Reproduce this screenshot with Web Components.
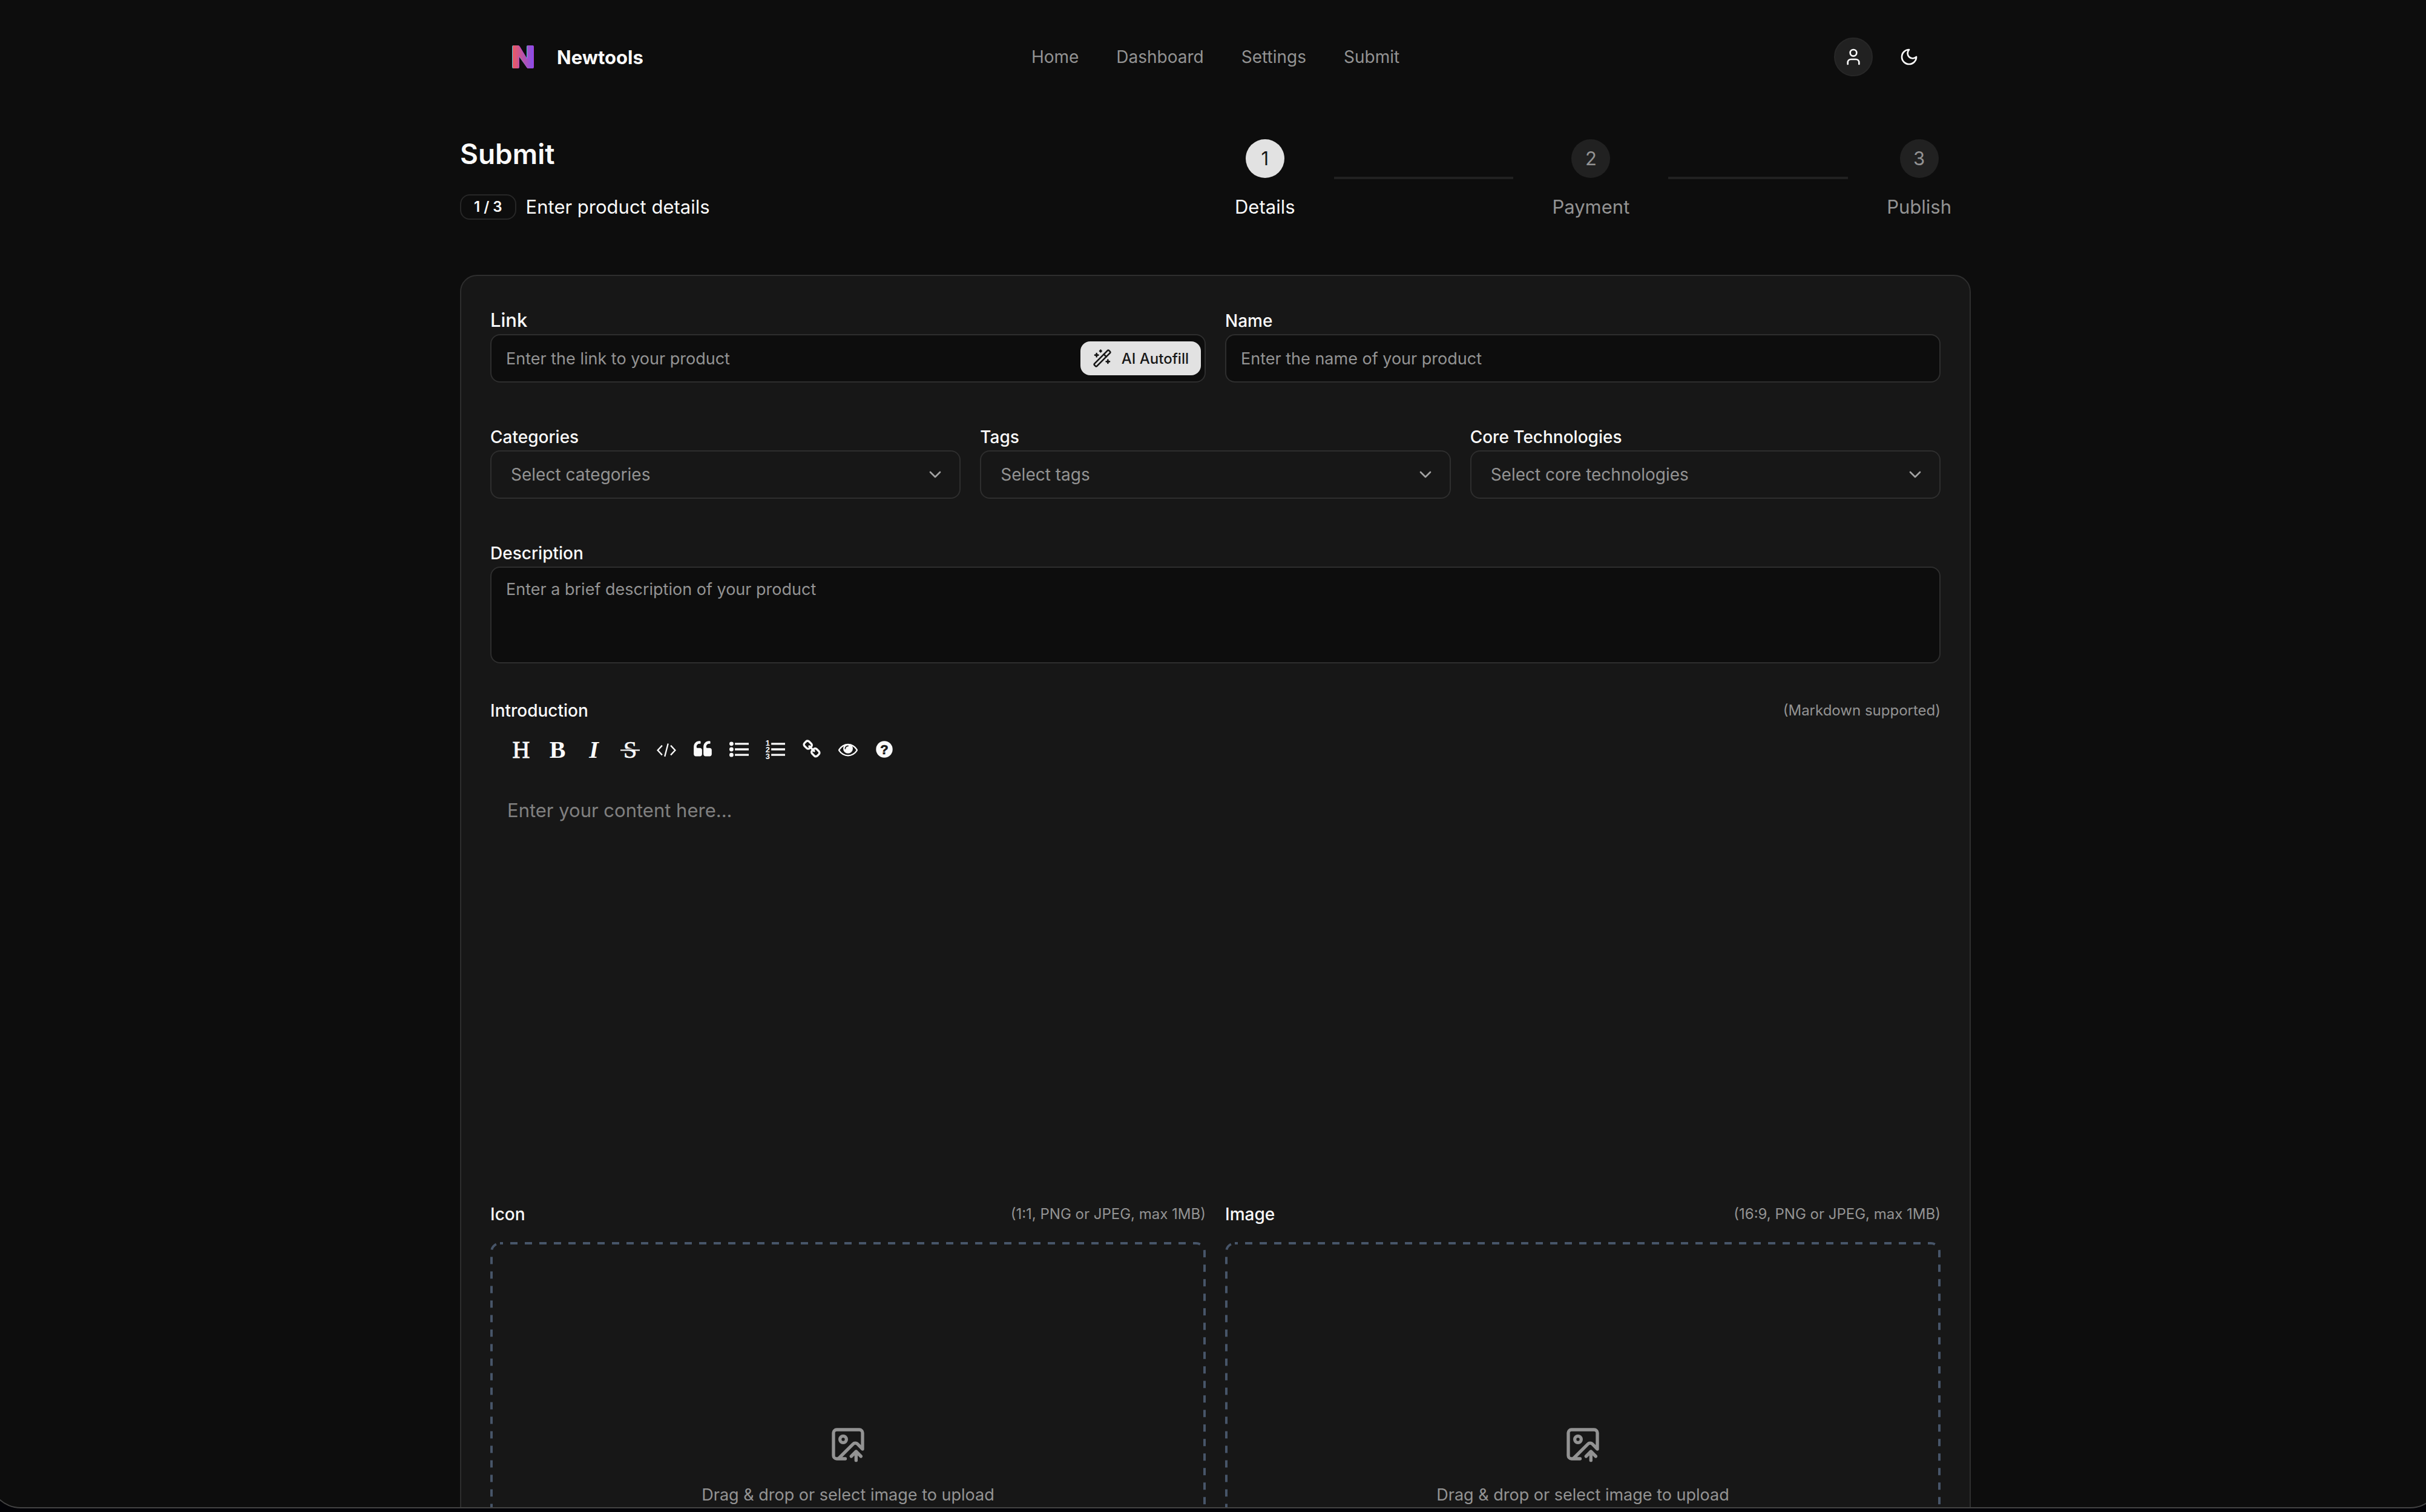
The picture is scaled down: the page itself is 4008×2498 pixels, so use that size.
<!DOCTYPE html>
<html lang="en">
<head>
<meta charset="UTF-8">
<title>Submit - Newtools</title>
<style>
    html {
        background: #030307;
    }

    body {
        margin: 0;
        overflow: hidden;
        font-family: Inter, "Liberation Sans", sans-serif;
        color: #fafafa;

        --bg: #0d0d0d;
        --card: #171717;
        --border: #2e2e2e;
        --muted: #939393;
        --secondary: #212121;
        --primary: #e2e2e2;
    }
</style>
</head>
<body>
<app-window>
    <site-header></site-header>
    <page-intro heading="Submit" step="1 / 3" text="Enter product details">
        <step-list></step-list>
    </page-intro>
    <form-card>
        <form-row columns="2">
            <text-field label="Link" placeholder="Enter the link to your product" large autofill></text-field>
            <text-field label="Name" placeholder="Enter the name of your product"></text-field>
        </form-row>
        <form-row columns="3">
            <select-field label="Categories" placeholder="Select categories"></select-field>
            <select-field label="Tags" placeholder="Select tags"></select-field>
            <select-field label="Core Technologies" placeholder="Select core technologies"></select-field>
        </form-row>
        <area-field label="Description" placeholder="Enter a brief description of your product"></area-field>
        <markdown-editor></markdown-editor>
        <form-row columns="2">
            <upload-field label="Icon" hint="(1:1, PNG or JPEG, max 1MB)"></upload-field>
            <upload-field label="Image" hint="(16:9, PNG or JPEG, max 1MB)"></upload-field>
        </form-row>
    </form-card>
</app-window>

<script>
class BaseElement extends HTMLElement {
    constructor() {
        super();
        this.attachShadow({ mode: 'open' });
        this.render();
    }

    attr(name) {
        return this.getAttribute(name) || '';
    }
}

// Rules shared by all the form controls
const controlStyles = `
    * { box-sizing: border-box; }

    label {
        display: block;
        font-size: 28px;
        font-weight: 500;
        line-height: 44px;
    }

    input, textarea, select {
        display: block;
        width: 100%;
        margin: 0;
        border: 2px solid var(--border);
        border-radius: 16px;
        background: var(--bg);
        color: var(--muted);
        font-family: inherit;
        font-size: 27px;
        line-height: 40px;
        outline: none;
    }

    ::placeholder {
        color: var(--muted);
        opacity: 1;
    }
`;

// Label on the left, small note on the right
const headStyles = `
    .head {
        display: flex;
        justify-content: space-between;
        align-items: center;
        line-height: 20px;
    }

    .head label { line-height: 20px; }

    .hint {
        font-size: 24px;
        color: var(--muted);
    }
`;

class AppWindow extends BaseElement {
    render() {
        this.shadowRoot.innerHTML = `
            <style>
                :host {
                    display: block;
                    box-sizing: border-box;
                    height: calc(100vh - 6px);
                    margin: 0 -26px 0 -18px;
                    overflow: hidden;
                    background: var(--bg);
                    border: 2px solid #434343;
                    border-top: 0;
                    border-radius: 0 0 52px 52px;
                }

                main {
                    max-width: 2496px;
                    margin: 0 auto;
                }
            </style>
            <main><slot></slot></main>
        `;
    }
}

class SiteHeader extends BaseElement {
    render() {
        this.shadowRoot.innerHTML = `
            <style>
                :host { display: block; }

                header {
                    display: grid;
                    grid-template-columns: 1fr auto 1fr;
                    align-items: center;
                    height: 188px;
                    padding: 0 66px;
                }

                a {
                    color: inherit;
                    text-decoration: none;
                }

                .brand {
                    display: flex;
                    align-items: center;
                    gap: 24px;
                    font-size: 31px;
                    font-weight: 700;
                }

                nav {
                    display: flex;
                    gap: 62px;
                    font-size: 28px;
                    color: var(--muted);
                }

                .actions {
                    display: flex;
                    align-items: center;
                    justify-content: flex-end;
                    gap: 24px;
                }

                button {
                    display: flex;
                    align-items: center;
                    justify-content: center;
                    box-sizing: border-box;
                    width: 72px;
                    height: 72px;
                    padding: 0;
                    border: 0;
                    background: none;
                    color: inherit;
                }

                .user {
                    width: 64px;
                    height: 64px;
                    border: 2px solid #272727;
                    border-radius: 50%;
                    background: var(--secondary);
                }

                .actions svg {
                    width: 32px;
                    height: 32px;
                    fill: none;
                    stroke: currentColor;
                    stroke-width: 2;
                    stroke-linecap: round;
                    stroke-linejoin: round;
                }
            </style>
            <header>
                <a class="brand" href="#">
                    <svg width="70" height="64" viewBox="0 0 70 64" aria-hidden="true">
                        <defs>
                            <linearGradient id="fill" x1="20" y1="0" x2="56" y2="0" gradientUnits="userSpaceOnUse">
                                <stop offset="0" stop-color="#ee5a5e"/>
                                <stop offset="1" stop-color="#844df0"/>
                            </linearGradient>
                        </defs>
                        <path fill="#45c8dc" d="M22 13h7q2 0 3 2l12 19V15q0-2 2-2h7q2 0 2 2v34q0 2-2 2h-6q-2 0-3-2L31 31v18q0 2-2 2h-7q-2 0-2-2V15q0-2 2-2z"/>
                        <path fill="#b93fd0" d="M24 13h6q2 0 3 2l12 20V15q0-2 2-2h7q2 0 2 2v34q0 2-2 2h-7q-2 0-3-2L32 29v20q0 2-2 2h-6q-2 0-2-2V15q0-2 2-2z"/>
                        <path fill="url(#fill)" d="M23 13h6q2 0 3 2l13 21V15q0-2 2-2h6q2 0 2 2v34q0 2-2 2h-6q-2 0-3-2L31 30v19q0 2-2 2h-6q-2 0-2-2V15q0-2 2-2z"/>
                    </svg>
                    <span>Newtools</span>
                </a>
                <nav>
                    <a href="#">Home</a>
                    <a href="#">Dashboard</a>
                    <a href="#">Settings</a>
                    <a href="#">Submit</a>
                </nav>
                <div class="actions">
                    <button class="user" type="button" aria-label="Account">
                        <svg viewBox="0 0 24 24"><path d="M19 21v-2a4 4 0 0 0-4-4H9a4 4 0 0 0-4 4v2"/><circle cx="12" cy="7" r="4"/></svg>
                    </button>
                    <button type="button" aria-label="Toggle theme">
                        <svg viewBox="0 0 24 24"><path d="M12 3a6 6 0 0 0 9 9 9 9 0 1 1-9-9Z"/></svg>
                    </button>
                </div>
            </header>
        `;
    }
}

class PageIntro extends BaseElement {
    render() {
        this.shadowRoot.innerHTML = `
            <style>
                :host {
                    display: grid;
                    grid-template-columns: 1fr 1fr;
                    padding: 34px 0 88px;
                }

                h1 {
                    margin: 0 0 32px;
                    font-size: 46px;
                    font-weight: 600;
                    line-height: 64px;
                }

                .row {
                    display: flex;
                    align-items: center;
                    gap: 16px;
                    font-size: 31px;
                    line-height: 48px;
                }

                .badge {
                    padding: 0 21px;
                    border: 2px solid #272727;
                    border-radius: 16px;
                    font-size: 24px;
                    font-weight: 600;
                    line-height: 38px;
                }
            </style>
            <div>
                <h1>${this.attr('heading')}</h1>
                <div class="row"><span class="badge">${this.attr('step')}</span><span>${this.attr('text')}</span></div>
            </div>
            <slot></slot>
        `;
    }
}

class StepList extends BaseElement {
    render() {
        this.shadowRoot.innerHTML = `
            <style>
                :host {
                    display: flex;
                    align-items: center;
                    gap: 64px;
                    padding: 0 32px;
                }

                .step {
                    display: flex;
                    flex-direction: column;
                    align-items: center;
                    gap: 24px;
                    padding-top: 8px;
                    font-size: 31px;
                    line-height: 48px;
                    color: var(--muted);
                }

                .number {
                    width: 64px;
                    border-radius: 50%;
                    background: var(--secondary);
                    line-height: 64px;
                    text-align: center;
                }

                .active { color: #fafafa; }

                .active .number {
                    background: var(--primary);
                    color: #171717;
                }

                .line {
                    flex: 1;
                    height: 4px;
                    background: var(--secondary);
                }
            </style>
            <div class="step active"><span class="number">1</span><span>Details</span></div>
            <div class="line"></div>
            <div class="step"><span class="number">2</span><span>Payment</span></div>
            <div class="line"></div>
            <div class="step"><span class="number">3</span><span>Publish</span></div>
        `;
    }
}

class FormCard extends BaseElement {
    render() {
        this.shadowRoot.innerHTML = `
            <style>
                :host { display: block; }

                form {
                    display: flex;
                    flex-direction: column;
                    gap: 68px;
                    padding: 52px 48px;
                    border: 2px solid var(--border);
                    border-radius: 28px;
                    background: var(--card);
                }
            </style>
            <form><slot></slot></form>
        `;
    }
}

class FormRow extends BaseElement {
    render() {
        this.shadowRoot.innerHTML = `
            <style>
                :host {
                    display: grid;
                    grid-template-columns: repeat(${this.attr('columns')}, minmax(0, 1fr));
                    gap: 32px;
                }
            </style>
            <slot></slot>
        `;
    }
}

class TextField extends BaseElement {
    render() {
        const button = `
            <button type="button">
                <svg viewBox="0 0 24 24" aria-hidden="true">
                    <path d="m21.64 3.64-1.28-1.28a1.21 1.21 0 0 0-1.72 0L2.36 18.64a1.21 1.21 0 0 0 0 1.72l1.28 1.28a1.2 1.2 0 0 0 1.72 0L21.64 5.36a1.2 1.2 0 0 0 0-1.72"/>
                    <path d="m14 7 3 3M5 6v4M19 14v4M10 2v2M7 8H3M21 16h-4M11 3H9"/>
                </svg>
                AI Autofill
            </button>
        `;

        this.shadowRoot.innerHTML = `
            <style>
                ${controlStyles}

                :host { display: block; }

                :host([large]) label {
                    padding-bottom: 2px;
                    font-size: 31px;
                    line-height: 42px;
                }

                .control {
                    display: grid;
                    align-items: center;
                }

                .control > * { grid-area: 1 / 1; }

                input {
                    height: 80px;
                    padding: 0 24px;
                }

                button {
                    display: flex;
                    align-items: center;
                    justify-self: end;
                    gap: 16px;
                    height: 56px;
                    margin-right: 8px;
                    padding: 0 20px;
                    border: 0;
                    border-radius: 16px;
                    background: var(--primary);
                    color: #171717;
                    font-family: inherit;
                    font-size: 24px;
                    font-weight: 500;
                }

                svg {
                    width: 32px;
                    height: 32px;
                    fill: none;
                    stroke: currentColor;
                    stroke-width: 2;
                    stroke-linecap: round;
                    stroke-linejoin: round;
                }
            </style>
            <label for="field">${this.attr('label')}</label>
            <div class="control">
                <input type="text" id="field" placeholder="${this.attr('placeholder')}">
                ${this.hasAttribute('autofill') ? button : ''}
            </div>
        `;
    }
}

class SelectField extends BaseElement {
    render() {
        this.shadowRoot.innerHTML = `
            <style>
                ${controlStyles}

                :host { display: block; }

                .control {
                    display: grid;
                    align-items: center;
                }

                .control > * { grid-area: 1 / 1; }

                select {
                    appearance: none;
                    height: 80px;
                    padding: 0 32px;
                    background: var(--card);
                    font-size: 28px;
                }

                svg {
                    justify-self: end;
                    width: 32px;
                    height: 32px;
                    margin-right: 26px;
                    fill: none;
                    stroke: #a3a3a3;
                    stroke-width: 2;
                    stroke-linecap: round;
                    stroke-linejoin: round;
                    pointer-events: none;
                }
            </style>
            <label for="field">${this.attr('label')}</label>
            <div class="control">
                <select id="field"><option>${this.attr('placeholder')}</option></select>
                <svg viewBox="0 0 24 24" aria-hidden="true"><path d="m6 9 6 6 6-6"/></svg>
            </div>
        `;
    }
}

class AreaField extends BaseElement {
    render() {
        this.shadowRoot.innerHTML = `
            <style>
                ${controlStyles}

                :host { display: block; }

                textarea {
                    height: 160px;
                    padding: 16px 24px;
                    resize: none;
                }
            </style>
            <label for="field">${this.attr('label')}</label>
            <textarea id="field" placeholder="${this.attr('placeholder')}"></textarea>
        `;
    }
}

class MarkdownEditor extends BaseElement {
    render() {
        const bars = '<path d="M512 288h1280v192H512zM512 800h1280v192H512zM512 1312h1280v192H512z"/>';
        const tools = [
            ['Heading', '<text x="896" y="1660" font-size="2240" stroke="currentColor" stroke-width="50">H</text>'],
            ['Bold', '<text x="896" y="1660" font-size="2240" font-weight="700">B</text>'],
            ['Italic', '<text x="896" y="1660" font-size="2240" font-weight="700" font-style="italic">I</text>'],
            ['Strikethrough', `
                <text x="896" y="1660" font-size="2240" stroke="currentColor" stroke-width="40">S</text>
                <path fill="#171717" d="M0 850h1792v64H0z"/>
                <path d="M0 914h1792v120H0z"/>`],
            ['Code', '<path fill="none" stroke="currentColor" stroke-width="130" d="M500 540 90 980l410 440M1292 540l410 440-410 440M1050 360 740 1560"/>'],
            ['Quote', '<path d="M832 960v384q0 80-56 136t-136 56h-384q-80 0-136-56t-56-136v-704q0-104 40.5-198.5t109.5-163.5 163.5-109.5 198.5-40.5h64q26 0 45 19t19 45v128q0 26-19 45t-45 19h-64q-106 0-181 75t-75 181v32q0 40 28 68t68 28h224q80 0 136 56t56 136zm896 0v384q0 80-56 136t-136 56h-384q-80 0-136-56t-56-136v-704q0-104 40.5-198.5t109.5-163.5 163.5-109.5 198.5-40.5h64q26 0 45 19t19 45v128q0 26-19 45t-45 19h-64q-106 0-181 75t-75 181v32q0 40 28 68t68 28h224q80 0 136 56t56 136z"/>'],
            ['Generic List', `<circle cx="192" cy="384" r="192"/><circle cx="192" cy="896" r="192"/><circle cx="192" cy="1408" r="192"/>${bars}`],
            ['Numbered List', `${bars}
                <g font-family="Liberation Sans, sans-serif" font-size="720" font-weight="700">
                    <text x="190" y="560">1</text><text x="190" y="1160">2</text><text x="190" y="1780">3</text>
                </g>`],
            ['Link', '<path d="M1520 1216q0-40-28-68l-208-208q-28-28-68-28-42 0-72 32 3 3 19 18.5t21.5 21.5 15 19 13 25.5 3.5 27.5q0 40-28 68t-68 28q-15 0-27.5-3.5t-25.5-13-19-15-21.5-21.5-18.5-19q-33 31-33 73 0 40 28 68l206 207q27 27 68 27 40 0 68-26l147-146q28-28 28-67zm-703-705q0-40-28-68l-206-207q-28-28-68-28-39 0-68 27l-147 146q-28 28-28 67 0 40 28 68l208 208q27 27 68 27 42 0 72-31-3-3-19-18.5t-21.5-21.5-15-19-13-25.5-3.5-27.5q0-40 28-68t68-28q15 0 27.5 3.5t25.5 13 19 15 21.5 21.5 18.5 19q33-31 33-73zm895 705q0 120-85 203l-147 146q-83 83-203 83-121 0-204-85l-206-207q-83-83-83-203 0-123 88-209l-88-88q-86 88-208 88-120 0-204-84l-208-208q-84-84-84-204t85-203l147-146q83-83 203-83 121 0 204 85l206 207q83 83 83 203 0 123-88 209l88 88q86-88 208-88 120 0 204 84l208 208q84 84 84 204z"/>'],
            ['Preview', '<path d="M1664 960q-152-236-381-353 61 104 61 225 0 185-131.5 316.5t-316.5 131.5-316.5-131.5-131.5-316.5q0-121 61-225-229 117-381 353 133 205 333.5 326.5t434.5 121.5 434.5-121.5 333.5-326.5zm-720-384q0-20-14-34t-34-14q-125 0-214.5 89.5t-89.5 214.5q0 20 14 34t34 14 34-14 14-34q0-86 61-147t147-61q20 0 34-14t14-34zm848 384q0 34-20 69-140 230-376.5 368.5t-499.5 138.5-499.5-139-376.5-368q-20-35-20-69t20-69q140-229 376.5-368t499.5-139 499.5 139 376.5 368q20 35 20 69z"/>'],
            ['Guide', `
                <circle cx="896" cy="896" r="768"/>
                <text x="896" y="1330" fill="#171717" stroke="#171717" stroke-width="40" font-family="Liberation Sans, sans-serif" font-size="1230" font-weight="700">?</text>`],
        ];

        this.shadowRoot.innerHTML = `
            <style>
                ${controlStyles}
                ${headStyles}

                :host { display: block; }

                .toolbar {
                    display: flex;
                    padding: 24px 21px 0;
                }

                button {
                    display: flex;
                    align-items: center;
                    justify-content: center;
                    width: 60px;
                    height: 60px;
                    padding: 0;
                    border: 0;
                    background: none;
                    color: inherit;
                }

                svg {
                    width: 32px;
                    height: 32px;
                    overflow: visible;
                    fill: currentColor;
                    font-family: "Liberation Serif", serif;
                    text-anchor: middle;
                }

                textarea {
                    height: 660px;
                    padding: 47px 28px;
                    border: 0;
                    background: none;
                    font-size: 31px;
                    line-height: 48px;
                    resize: none;
                }

                textarea::placeholder { color: #808080; }
            </style>
            <div class="head">
                <label for="content">Introduction</label>
                <span class="hint">(Markdown supported)</span>
            </div>
            <div class="toolbar">
                ${tools.map(([name, icon]) => `<button type="button" aria-label="${name}"><svg viewBox="0 0 1792 1792">${icon}</svg></button>`).join('')}
            </div>
            <textarea id="content" placeholder="Enter your content here..."></textarea>
        `;
    }
}

class UploadField extends BaseElement {
    render() {
        this.shadowRoot.innerHTML = `
            <style>
                ${controlStyles}
                ${headStyles}

                :host { display: block; }

                .zone {
                    position: relative;
                    display: flex;
                    flex-direction: column;
                    align-items: center;
                    justify-content: center;
                    gap: 32px;
                    height: 740px;
                    margin-top: 36px;
                    color: var(--muted);
                    font-size: 27px;
                    font-weight: 400;
                    line-height: 40px;
                }

                input { display: none; }

                .icon {
                    width: 64px;
                    height: 64px;
                    fill: none;
                    stroke: currentColor;
                    stroke-width: 2;
                    stroke-linecap: round;
                    stroke-linejoin: round;
                }

                /* dashed outline, drawn over the edge of the zone */
                .outline {
                    position: absolute;
                    inset: 2px;
                    width: calc(100% - 4px);
                    height: calc(100% - 4px);
                    overflow: visible;
                    fill: none;
                    stroke: #475569;
                    stroke-width: 4;
                    stroke-dasharray: 12 12;
                    stroke-dashoffset: 7;
                }
            </style>
            <div class="head">
                <label for="file">${this.attr('label')}</label>
                <span class="hint">${this.attr('hint')}</span>
            </div>
            <label class="zone" for="file">
                <svg class="outline" aria-hidden="true"><rect width="100%" height="100%" rx="14"/></svg>
                <svg class="icon" viewBox="0 0 24 24" aria-hidden="true">
                    <path d="M10.3 21H5a2 2 0 0 1-2-2V5a2 2 0 0 1 2-2h14a2 2 0 0 1 2 2v10l-3.1-3.1a2 2 0 0 0-2.814.014L6 21"/>
                    <path d="m14 19.5 3-3 3 3M17 22v-5.5"/>
                    <circle cx="9" cy="9" r="2"/>
                </svg>
                <span>Drag &amp; drop or select image to upload</span>
                <input type="file" id="file" accept="image/png, image/jpeg">
            </label>
        `;
    }
}

customElements.define('app-window', AppWindow);
customElements.define('site-header', SiteHeader);
customElements.define('page-intro', PageIntro);
customElements.define('step-list', StepList);
customElements.define('form-card', FormCard);
customElements.define('form-row', FormRow);
customElements.define('text-field', TextField);
customElements.define('select-field', SelectField);
customElements.define('area-field', AreaField);
customElements.define('markdown-editor', MarkdownEditor);
customElements.define('upload-field', UploadField);
</script>
</body>
</html>
